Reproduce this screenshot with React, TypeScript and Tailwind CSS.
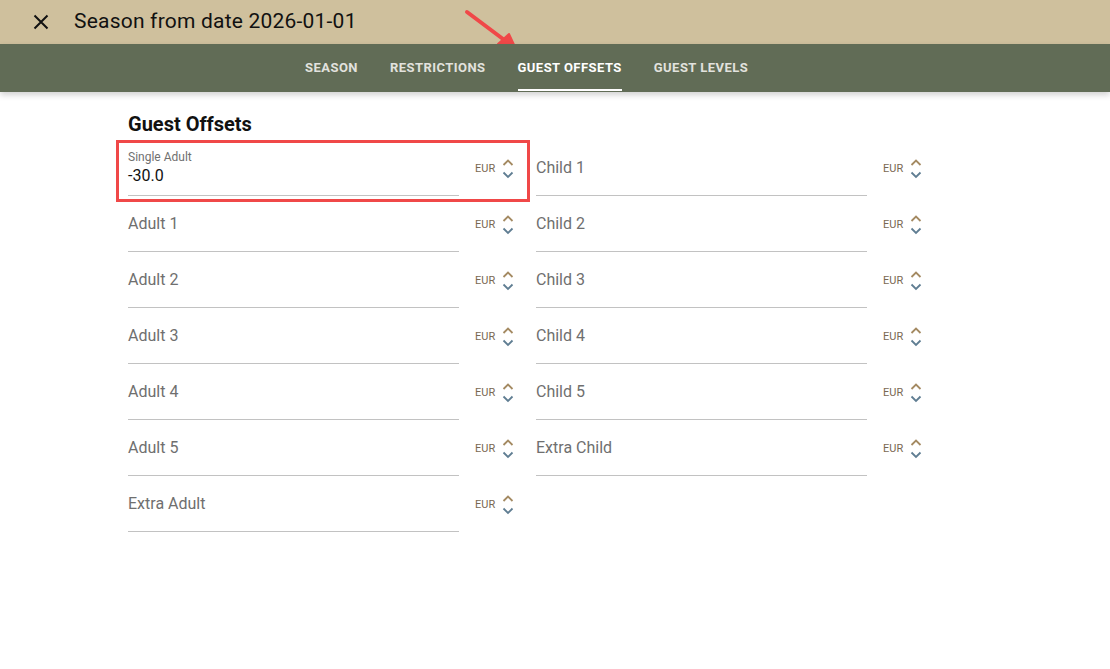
import React from 'react';

interface Field {
  label: string;
  value?: string;
}

const leftFields: Field[] = [
  { label: 'Single Adult', value: '-30.0' },
  { label: 'Adult 1' },
  { label: 'Adult 2' },
  { label: 'Adult 3' },
  { label: 'Adult 4' },
  { label: 'Adult 5' },
  { label: 'Extra Adult' },
];

const rightFields: Field[] = [
  { label: 'Child 1' },
  { label: 'Child 2' },
  { label: 'Child 3' },
  { label: 'Child 4' },
  { label: 'Child 5' },
  { label: 'Extra Child' },
];

const tabs = ['Season', 'Restrictions', 'Guest Offsets', 'Guest Levels'];

const Stepper: React.FC = () => (
  <svg width="12" height="22" viewBox="0 0 12 22" className="ml-[7px] mt-[2px]">
    <path d="M1.5 7 L6 2.5 L10.5 7" fill="none" stroke="#a48a62" strokeWidth="1.8" />
    <path d="M1.5 14.5 L6 19 L10.5 14.5" fill="none" stroke="#5f7d92" strokeWidth="1.8" />
  </svg>
);

const OffsetField: React.FC<{ field: Field }> = ({ field }) => (
  <div className="flex items-center h-14">
    <div className="w-[331px] h-full border-b border-[#c2c2c2] flex flex-col justify-center">
      {field.value ? (
        <>
          <span className="text-[12px] leading-[14px] text-[#707070] mt-[1px]">{field.label}</span>
          <span className="text-[16px] leading-[20px] text-[#111] mt-[2px]">{field.value}</span>
        </>
      ) : (
        <span className="text-[16px] leading-5 text-[#6f6f6f]">{field.label}</span>
      )}
    </div>
    <span className="ml-4 mt-[2px] text-[11px] text-[#7a6852]">EUR</span>
    <Stepper />
  </div>
);

const App: React.FC = () => {
  return (
    <div className="relative w-full min-h-screen bg-white font-['Roboto',sans-serif]">
      {/* header */}
      <div className="h-11 bg-[#cfc09d] flex items-center">
        <svg width="16" height="16" viewBox="0 0 16 16" className="ml-[33px]">
          <path d="M1.5 1.5 L14.5 14.5 M14.5 1.5 L1.5 14.5" stroke="#111" strokeWidth="2" />
        </svg>
        <h1 className="ml-[25px] text-[21px] tracking-[0.01em] text-[#111]">Season from date 2026-01-01</h1>
      </div>

      {/* tabs */}
      <div className="h-12 bg-[#616c56] flex shadow-[0_3px_6px_rgba(0,0,0,0.18)] relative z-10">
        <div className="flex h-full ml-[289px]">
          {tabs.map((t) => {
            const active = t === 'Guest Offsets';
            return (
              <div key={t} className="relative h-full px-4 flex items-center">
                <span className={`text-[13px] font-bold uppercase tracking-[0.035em] ${active ? 'text-white' : 'text-[#e2e2de]'}`}>
                  {t}
                </span>
                {active && <div className="absolute left-4 right-4 bottom-[1px] h-[2px] bg-white" />}
              </div>
            );
          })}
        </div>
      </div>

      {/* content */}
      <div className="pl-[128px] pt-[18px]">
        <h2 className="text-[20px] font-bold text-[#111] leading-7">Guest Offsets</h2>
        <div className="flex gap-5 mt-[2px]">
          <div className="flex flex-col w-[388px]">
            {leftFields.map((f) => (
              <OffsetField key={f.label} field={f} />
            ))}
          </div>
          <div className="flex flex-col">
            {rightFields.map((f) => (
              <OffsetField key={f.label} field={f} />
            ))}
          </div>
        </div>
      </div>

      {/* annotations */}
      <div className="absolute left-[116px] top-[140px] w-[414px] h-[62px] border-[3px] border-[#f04848] pointer-events-none" />
      <svg className="absolute left-0 top-0 pointer-events-none" width="1110" height="100">
        <path d="M467 12 L507 42" stroke="#f04848" strokeWidth="4" strokeLinecap="round" />
        <path d="M516 49 L498 44 L509 34 Z" fill="#f04848" stroke="#f04848" strokeWidth="2" strokeLinejoin="round" />
      </svg>
    </div>
  );
};

export default App;
